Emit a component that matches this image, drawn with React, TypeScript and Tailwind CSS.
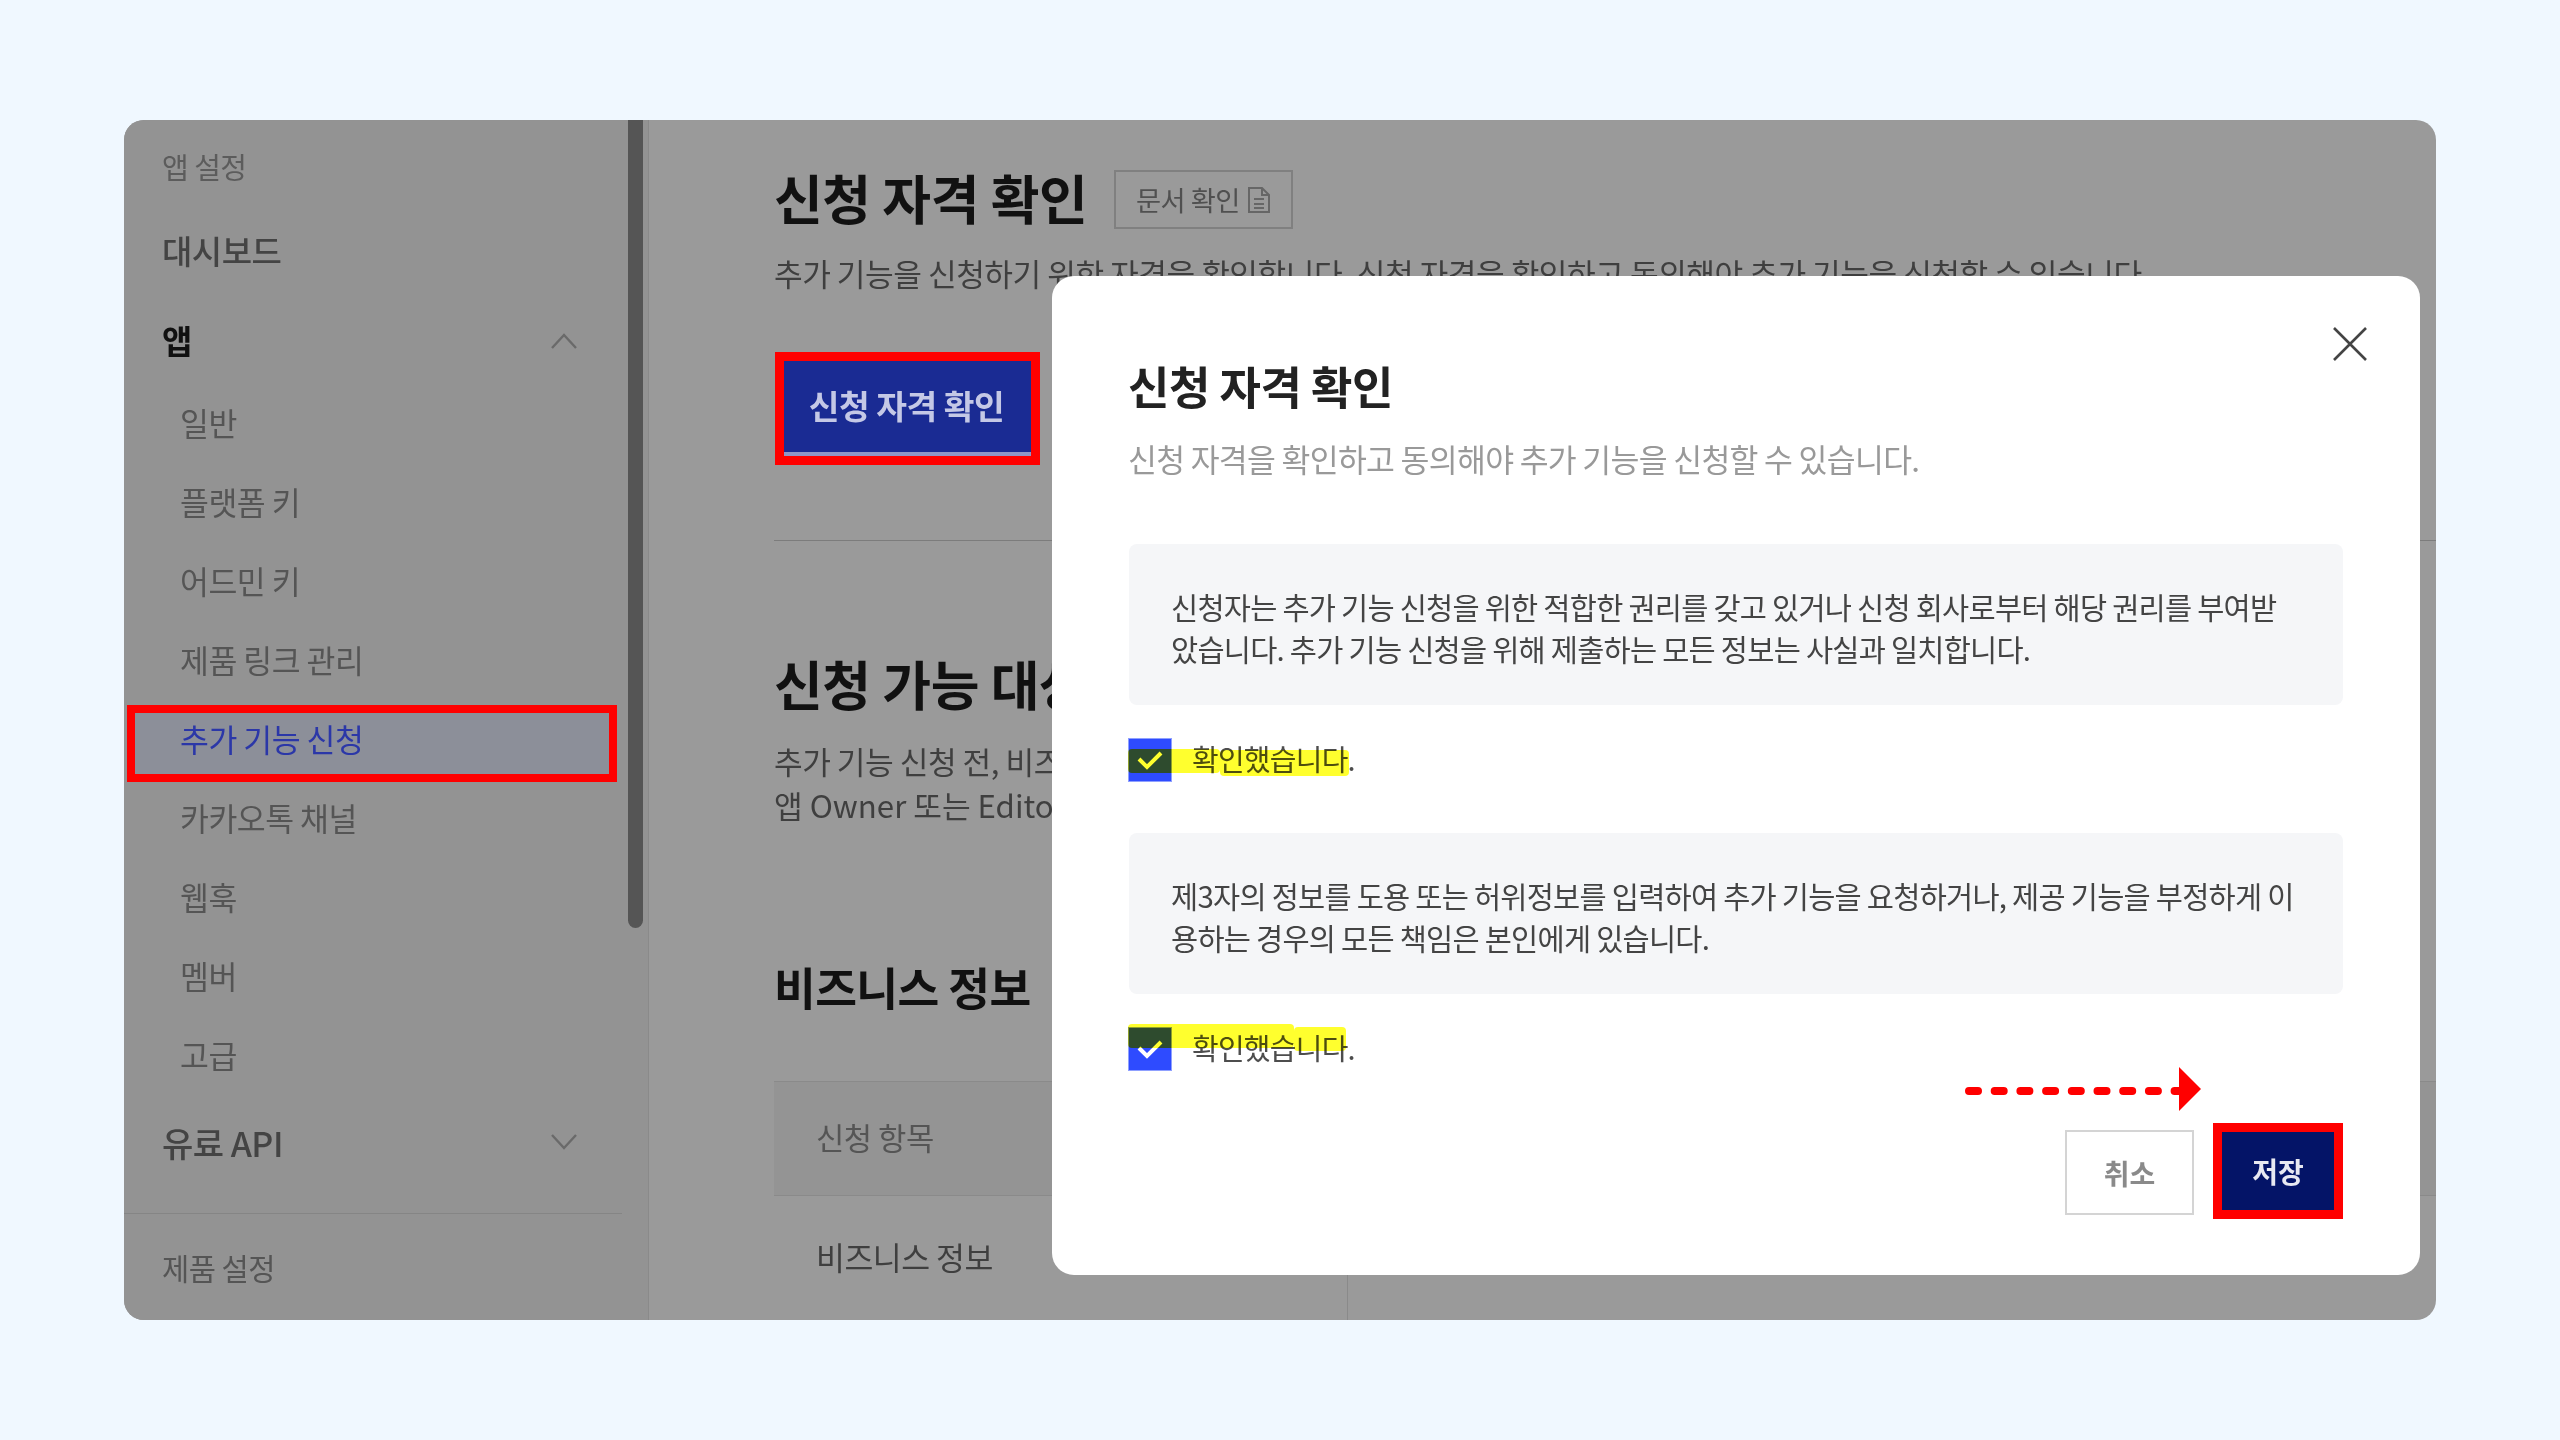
// 추가 기능 신청 안내 캡처: 어두워진 앱 설정 화면 위에 신청 자격 확인 모달
import { type ReactNode } from 'react'

const SUB_ITEMS = ['일반', '플랫폼 키', '어드민 키', '제품 링크 관리', '추가 기능 신청', '카카오톡 채널', '웹훅', '멤버', '고급']

function Chevron({ up }: { up?: boolean }) {
  return (
    <svg width={28} height={18} viewBox="0 0 28 18" fill="none" stroke="#6a6a6a" strokeWidth={2.4} aria-hidden="true">
      <path d={up ? 'M2 16 14 3l12 13' : 'M2 2l12 13L26 2'} />
    </svg>
  )
}

function Confirm({ second }: { second?: boolean }) {
  return (
    <div className="relative -ml-px flex h-[44px] items-center">
      <span className="flex h-[44px] w-[44px] items-center justify-center border border-[#8fa0ff] bg-[#2e4bff]">
        <svg width={26} height={20} viewBox="0 0 26 20" fill="none" stroke="#fff" strokeWidth={4} aria-hidden="true">
          <path d="M2 9l8 8L24 3" />
        </svg>
      </span>
      <span className="ml-[20px] pb-[4px] text-[29px] leading-[42px] tracking-[-0.75px] text-[#4d4d4d]">확인했습니다.</span>
      {/* 형광펜 표시 */}
      {second ? (
        <>
          <span className="absolute left-0 top-[-3px] h-[24px] w-[166px] rounded-[4px] bg-[#ffff2e] mix-blend-multiply" />
          <span className="absolute left-[166px] top-0 h-[24px] w-[52px] rounded-[4px] bg-[#ffff2e] mix-blend-multiply" />
        </>
      ) : (
        <>
          <span className="absolute left-0 top-[11px] h-[24px] w-[92px] rounded-[4px] bg-[#ffff2e] mix-blend-multiply" />
          <span className="absolute left-[92px] top-[12px] h-[26px] w-[129px] rounded-[4px] bg-[#ffff2e] mix-blend-multiply" />
        </>
      )}
    </div>
  )
}

function Notice({ children }: { children: ReactNode }) {
  return <div className="h-[161px] rounded-[8px] bg-[#f5f6f8] pl-[42px] pr-[40px] pt-[41px] text-[29.5px] leading-[42px] tracking-[-0.75px] text-[#444]">{children}</div>
}

export default function App() {
  return (
    <div className="h-screen bg-[#f0f8ff] px-[124px] pt-[120px] font-['Noto_Sans_CJK_KR','Noto_Sans',sans-serif]">
      <div className="relative flex h-[1200px] overflow-hidden rounded-[20px] bg-[#9a9a9a]">
        {/* 사이드바 */}
        <aside className="flex w-[525px] shrink-0 border-r border-[#8a8a8a] bg-[#939393]">
          <div className="w-[504px] pt-[21px]">
            <div className="flex h-[52px] items-center pl-[38px] text-[29px] tracking-[-0.5px] text-[#5c5c5c]">앱 설정</div>
            <div className="mt-[26px] flex h-[64px] items-center pl-[38px] text-[33px] font-medium tracking-[-0.5px] text-[#444]">대시보드</div>
            <div className="mt-[26px] flex h-[64px] items-center justify-between pl-[38px] pr-[50px] text-[33px] font-bold text-[#111]">
              앱
              <Chevron up />
            </div>
            <div className="mt-[10px]">
              {SUB_ITEMS.map((t) => {
                const active = t === '추가 기능 신청'
                return (
                  <div key={t} className={`relative flex h-[79px] items-center pl-[56px] text-[31.4px] tracking-[-0.5px] ${active ? 'text-[#2b37a8]' : 'text-[#555]'}`}>
                    {active && <span className="absolute left-[3px] top-[6px] h-[77px] w-[490px] border-[8px] border-[#ff0000] bg-[#8c8f99]" />}
                    <span className="relative">{t}</span>
                  </div>
                )
              })}
            </div>
            <div className="mt-[16px] flex h-[64px] items-center justify-between pl-[38px] pr-[50px] text-[34px] font-medium tracking-[-0.5px] text-[#444]">
              유료 API
              <Chevron />
            </div>
            <div className="mt-[39px] h-px w-[498px] bg-[#858585]" />
            <div className="mt-[22px] flex h-[64px] items-center pl-[38px] text-[29.6px] tracking-[-0.5px] text-[#555]">제품 설정</div>
          </div>
          <div className="h-[808px] w-[15px] rounded-b-[8px] bg-[#555]" />
        </aside>

        {/* 본문 */}
        <main className="min-w-0 flex-1 pl-[125px] pt-[50px]">
          <div className="flex h-[59px] items-center">
            <h1 className="pb-[4px] text-[53px] font-semibold leading-none tracking-[-0.4px] text-[#111]">신청 자격 확인</h1>
            <button className="ml-[27px] flex h-[59px] w-[179px] items-center justify-center gap-[6px] border-2 border-[#808080] text-[27.3px] tracking-[-0.5px] text-[#505050]">
              문서 확인
              <svg width={26} height={28} viewBox="0 0 26 28" fill="none" stroke="#666" strokeWidth={2} aria-hidden="true">
                <path d="M3 2h13l7 7v17H3zM16 2v7h7M8 13h10M8 18h10M8 22h10" />
              </svg>
            </button>
          </div>
          <p className="mt-[22px] whitespace-nowrap text-[31.2px] leading-[44px] tracking-[-0.5px] text-[#3f3f3f]">
            추가 기능을 신청하기 위한 자격을 확인합니다. 신청 자격을 확인하고 동의해야 추가 기능을 신청할 수 있습니다.
          </p>
          <button className="ml-px mt-[57px] h-[113px] w-[265px] border-[9px] border-[#ff0000] bg-[#1a2b93]">
            <span className="flex h-full items-center justify-center border-b-[4px] border-[#8f96c8] pb-[2px] pr-[2px] text-[33.4px] font-semibold tracking-[-0.5px] text-[#c4c8e6]">신청 자격 확인</span>
          </button>
          <div className="mt-[75px] h-px bg-[#7c7c7c]" />
          <h2 className="mt-[112px] h-[63px] text-[53px] font-semibold leading-[60px] tracking-[-0.4px] text-[#111]">신청 가능 대상</h2>
          <p className="mt-[23px] whitespace-nowrap text-[31.2px] leading-[44px] tracking-[-0.5px] text-[#3f3f3f]">
            추가 기능 신청 전, 비즈니스 정보를 확인해 주세요.
            <br />
            <span className="tracking-[0px]">앱 Owner 또는 Editor 권한이 필요합니다.</span>
          </p>
          <h2 className="mt-[129px] h-[62px] text-[45.4px] font-semibold leading-[60px] tracking-[-0.6px] text-[#111]">비즈니스 정보</h2>
          <div className="mt-[63px] flex h-[115px] items-center border-y border-[#8a8a8a] bg-[#949494] pb-[3px] pl-[42px] text-[30.8px] tracking-[-0.5px] text-[#555]">신청 항목</div>
          <div className="flex h-[124px]">
            <div className="flex w-[574px] items-center border-r border-[#8a8a8a] pb-[2px] pl-[42px] text-[31.4px] tracking-[-0.5px] text-[#3f3f3f]">비즈니스 정보</div>
          </div>
        </main>

        {/* 모달 */}
        <div className="absolute left-[928px] top-[156px] h-[999px] w-[1368px] rounded-[22px] bg-white px-[77px] pt-[80px]">
          <svg className="absolute right-[52px] top-[50px]" width={36} height={36} viewBox="0 0 36 36" stroke="#444" strokeWidth={2.6} aria-hidden="true">
            <path d="M2 2l32 32M34 2 2 34" />
          </svg>
          <h2 className="-ml-px h-[63px] text-[45px] font-semibold leading-[60px] tracking-[-0.5px] text-[#222]">신청 자격 확인</h2>
          <p className="-ml-px mt-[18px] text-[31.4px] leading-[44px] tracking-[-0.7px] text-[#999]">신청 자격을 확인하고 동의해야 추가 기능을 신청할 수 있습니다.</p>
          <div className="mt-[63px]">
            <Notice>
              신청자는 추가 기능 신청을 위한 적합한 권리를 갖고 있거나 신청 회사로부터 해당 권리를 부여받
              <br />
              았습니다. 추가 기능 신청을 위해 제출하는 모든 정보는 사실과 일치합니다.
            </Notice>
          </div>
          <div className="mt-[33px]">
            <Confirm />
          </div>
          <div className="mt-[51px]">
            <Notice>
              제3자의 정보를 도용 또는 허위정보를 입력하여 추가 기능을 요청하거나, 제공 기능을 부정하게 이
              <br />
              용하는 경우의 모든 책임은 본인에게 있습니다.
            </Notice>
          </div>
          <div className="mt-[33px]">
            <Confirm second />
          </div>

          <svg className="absolute left-[908px] top-[789px]" width={250} height={50} viewBox="0 0 250 50" aria-hidden="true">
            <path d="M9 26H219" fill="none" stroke="#ff0000" strokeWidth={8} strokeLinecap="round" strokeDasharray="9 16.7" />
            <polygon points="219,2 241,24 219,46" fill="#ff0000" />
          </svg>

          <div className="mt-[52px] flex items-start justify-end gap-[19px]">
            <button className="mt-[7px] h-[85px] w-[129px] border-2 border-[#d4d4d4] text-[28px] font-semibold text-[#8a8a8a]">취소</button>
            <button className="h-[96px] w-[130px] border-[9px] border-[#ff0000] bg-[#041467] text-[28px] font-bold text-[#e8e9f2]">저장</button>
          </div>
        </div>
      </div>
    </div>
  )
}
